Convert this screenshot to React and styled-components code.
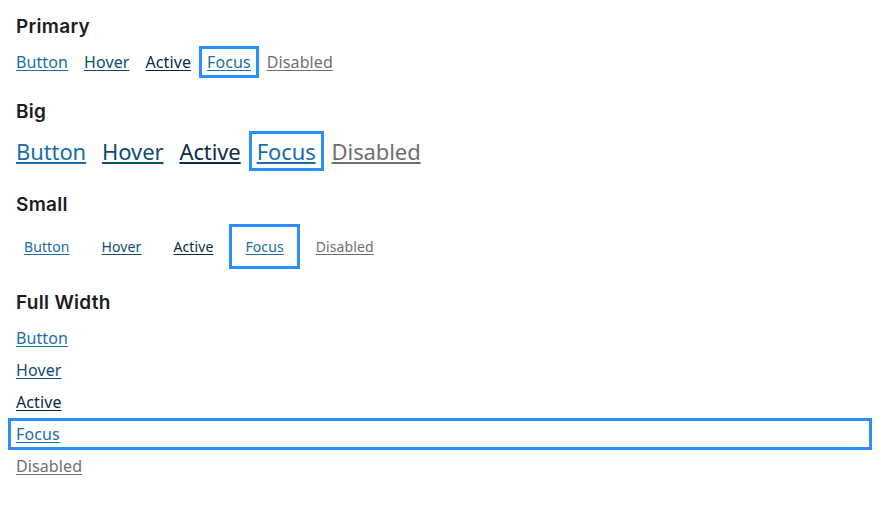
import React from "react";
import styled, { createGlobalStyle, css } from "styled-components";

const GlobalStyle = createGlobalStyle`
  body {
    margin: 0;
    background: #ffffff;
  }
`;

const Page = styled.main`
  padding: 13px 8px;
`;

const Section = styled.section`
  margin-bottom: 20px;
`;

const Heading = styled.h2`
  margin: 0 0 6px;
  padding: 0 8px;
  font-family: Inter, "Open Sans", sans-serif;
  font-weight: 600;
  font-size: 19px;
  letter-spacing: 0.3px;
  line-height: 27px;
  color: #1c1c1c;
`;

const Row = styled.div`
  display: flex;
  flex-direction: ${props => (props.stacked ? "column" : "row")};
  align-items: ${props => (props.stacked ? "stretch" : "flex-start")};
`;

const colors = {
  default: "#1a6ea5",
  hover: "#0f4c77",
  active: "#0d2b45",
  focus: "#1a6ea5",
  disabled: "#6f6f6f",
};

const sizes = {
  normal: css`
    font-size: 16px;
    letter-spacing: 0.1px;
    padding: 4px 8px;
  `,
  big: css`
    font-size: 22px;
    letter-spacing: -0.1px;
    padding: 4px 8px 3px;
  `,
  small: css`
    font-size: 14px;
    letter-spacing: 0.1px;
    padding: 12px 16px;
  `,
};

const LinkButton = styled.a`
  display: block;
  font-family: "Noto Sans", "Open Sans", sans-serif;
  line-height: 1.5;
  color: ${props => colors[props.state]};
  text-decoration: underline;
  text-underline-offset: 2px;
  cursor: ${props => (props.state === "disabled" ? "default" : "pointer")};
  ${props => sizes[props.size]}
  ${props =>
    props.state === "focus" &&
    css`
      box-shadow: inset 0 0 0 3px #2a90ff;
    `}
`;

const states = [
  ["default", "Button"],
  ["hover", "Hover"],
  ["active", "Active"],
  ["focus", "Focus"],
  ["disabled", "Disabled"],
];

const Group = ({ title, size, stacked }) => (
  <Section>
    <Heading>{title}</Heading>
    <Row stacked={stacked}>
      {states.map(([state, label]) => (
        <LinkButton key={state} state={state} size={size}>
          {label}
        </LinkButton>
      ))}
    </Row>
  </Section>
);

const App = () => (
  <>
    <GlobalStyle />
    <Page>
      <Group title="Primary" size="normal" />
      <Group title="Big" size="big" />
      <Group title="Small" size="small" />
      <Group title="Full Width" size="normal" stacked />
    </Page>
  </>
);

export default App;
